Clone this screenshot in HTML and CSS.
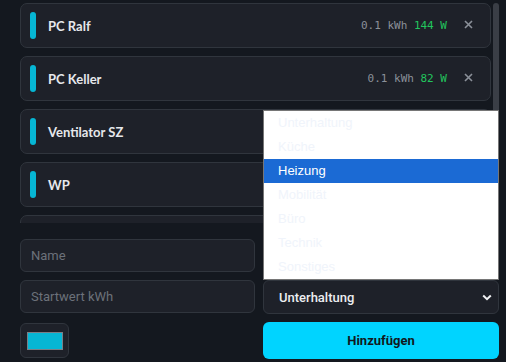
FILE: index.html
```html
<!DOCTYPE html>
<html lang="de">
<head>
<meta charset="utf-8">
<title>Geräte</title>
<link rel="stylesheet" href="styles.css">
</head>
<body>
<div class="app">
  <div class="list-area">
    <div class="list">
      <div class="card">
        <span class="bar"></span>
        <span class="name">PC Ralf</span>
        <span class="metrics"><span class="kwh">0.1 kWh</span> <span class="watt">144 W</span></span>
        <svg class="close" width="9" height="9" viewBox="0 0 9 9"><path d="M1 1L8 8M8 1L1 8"/></svg>
      </div>
      <div class="card">
        <span class="bar"></span>
        <span class="name">PC Keller</span>
        <span class="metrics"><span class="kwh">0.1 kWh</span> <span class="watt">82 W</span></span>
        <svg class="close" width="9" height="9" viewBox="0 0 9 9"><path d="M1 1L8 8M8 1L1 8"/></svg>
      </div>
      <div class="card">
        <span class="bar"></span>
        <span class="name">Ventilator SZ</span>
        <span class="metrics"><span class="kwh">0.0 kWh</span> <span class="watt">0 W</span></span>
        <svg class="close" width="9" height="9" viewBox="0 0 9 9"><path d="M1 1L8 8M8 1L1 8"/></svg>
      </div>
      <div class="card">
        <span class="bar"></span>
        <span class="name">WP</span>
        <span class="metrics"><span class="kwh">0.0 kWh</span> <span class="watt">0 W</span></span>
        <svg class="close" width="9" height="9" viewBox="0 0 9 9"><path d="M1 1L8 8M8 1L1 8"/></svg>
      </div>
      <div class="card">
        <span class="bar"></span>
        <span class="name">Kühlschrank</span>
        <span class="metrics"><span class="kwh">0.0 kWh</span> <span class="watt">0 W</span></span>
        <svg class="close" width="9" height="9" viewBox="0 0 9 9"><path d="M1 1L8 8M8 1L1 8"/></svg>
      </div>
    </div>
    <div class="scrollbar"><div class="thumb"></div></div>
  </div>

  <form class="form">
    <input class="field" type="text" placeholder="Name">
    <input class="field" type="text" placeholder="Watt">
    <input class="field" type="text" placeholder="Startwert kWh">
    <div class="select-wrap">
      <div class="select">
        <span>Unterhaltung</span>
        <svg class="chev" width="10" height="7" viewBox="0 0 10 7"><path d="M1.2 1.5L5 5.2L8.8 1.5"/></svg>
      </div>
      <ul class="popup">
        <li>Unterhaltung</li>
        <li>Küche</li>
        <li class="active">Heizung</li>
        <li>Mobilität</li>
        <li>Büro</li>
        <li>Technik</li>
        <li>Sonstiges</li>
      </ul>
    </div>
    <div class="color-box"><span class="swatch"></span></div>
    <button class="add" type="button">Hinzufügen</button>
  </form>
</div>
</body>
</html>
```

FILE: styles.css
```css
html, body {
  margin: 0;
  padding: 0;
  background: #14181f;
}

body {
  font-family: Roboto, "Liberation Sans", Arial, sans-serif;
  width: 506px;
  height: 362px;
  overflow: hidden;
}

.app {
  padding: 0 7px 0 20px;
}

.list-area {
  display: flex;
  height: 223px;
}

.list {
  flex: 1;
  overflow: hidden;
  box-sizing: border-box;
  padding: 3px 0 0;
  display: flex;
  flex-direction: column;
  gap: 8px;
}

.scrollbar {
  width: 6px;
  margin-left: 2px;
  padding-top: 3px;
}

.thumb {
  height: 150px;
  background: #3a3e46;
  border-radius: 3px;
}

.card {
  flex: 0 0 45px;
  box-sizing: border-box;
  display: flex;
  align-items: center;
  padding: 0 17px 0 9px;
  background: #1e2129;
  border: 1px solid #30353d;
  border-radius: 7px;
}

.bar {
  width: 6px;
  height: 27px;
  border-radius: 3px;
  background: #06b6d4;
  flex: none;
}

.name {
  margin-left: 12px;
  font-family: Lato, "Noto Sans", sans-serif;
  font-weight: 700;
  font-size: 13px;
  color: #e6e8ec;
  flex: 1;
}

.metrics {
  font-family: "DejaVu Sans Mono", monospace;
  font-size: 11px;
  white-space: pre;
  margin-right: 1px;
}

.kwh {
  color: #8b9099;
}

.watt {
  color: #22c55e;
}

.close {
  margin-left: 16px;
  fill: none;
  stroke: #8b9099;
  stroke-width: 1.6;
  margin-top: -2px;
}

.form {
  margin: 16px 0 0;
  display: grid;
  grid-template-columns: 235px 236px;
  column-gap: 8px;
  row-gap: 8px;
}

.field {
  box-sizing: border-box;
  height: 33px;
  background: #1e2129;
  border: 1px solid #30353d;
  border-radius: 6px;
  padding: 0 10px;
  font-family: Roboto, sans-serif;
  font-size: 13px;
  color: #e6e8ec;
  outline: none;
}

.field::placeholder {
  color: #6c717a;
}

.select-wrap {
  position: relative;
}

.select {
  box-sizing: border-box;
  height: 34px;
  background: #1e2129;
  border: 1px solid #30353d;
  border-radius: 6px;
  padding: 0 6px 0 15px;
  display: flex;
  align-items: center;
  justify-content: space-between;
  font-size: 13px;
  font-weight: 500;
  color: #eceef1;
}

.chev {
  fill: none;
  stroke: #f1f2f4;
  stroke-width: 2;
}

.popup {
  position: absolute;
  left: 0;
  right: 0;
  bottom: 100%;
  margin: 0;
  padding: 0;
  list-style: none;
  background: #ffffff;
  border: 1px solid #767676;
  font-family: "Liberation Sans", Arial, sans-serif;
  font-size: 13px;
}

.popup li {
  height: 24px;
  line-height: 24px;
  padding-left: 14px;
  color: #f0f4fb;
}

.popup li.active {
  background: #1b6ad4;
  color: #ffffff;
}

.color-box {
  box-sizing: border-box;
  width: 49px;
  height: 35px;
  margin-top: 1px;
  background: #1e2129;
  border: 1px solid #30353d;
  border-radius: 6px;
  display: flex;
  align-items: center;
  padding-left: 6px;
}

.swatch {
  box-sizing: border-box;
  width: 36px;
  height: 18px;
  background: #06b6d4;
  border: 1px solid #7a7f86;
}

.add {
  height: 37px;
  border: none;
  border-radius: 6px;
  background: #00d4ff;
  color: #111820;
  font-family: Roboto, sans-serif;
  font-weight: 700;
  font-size: 13px;
}
```
